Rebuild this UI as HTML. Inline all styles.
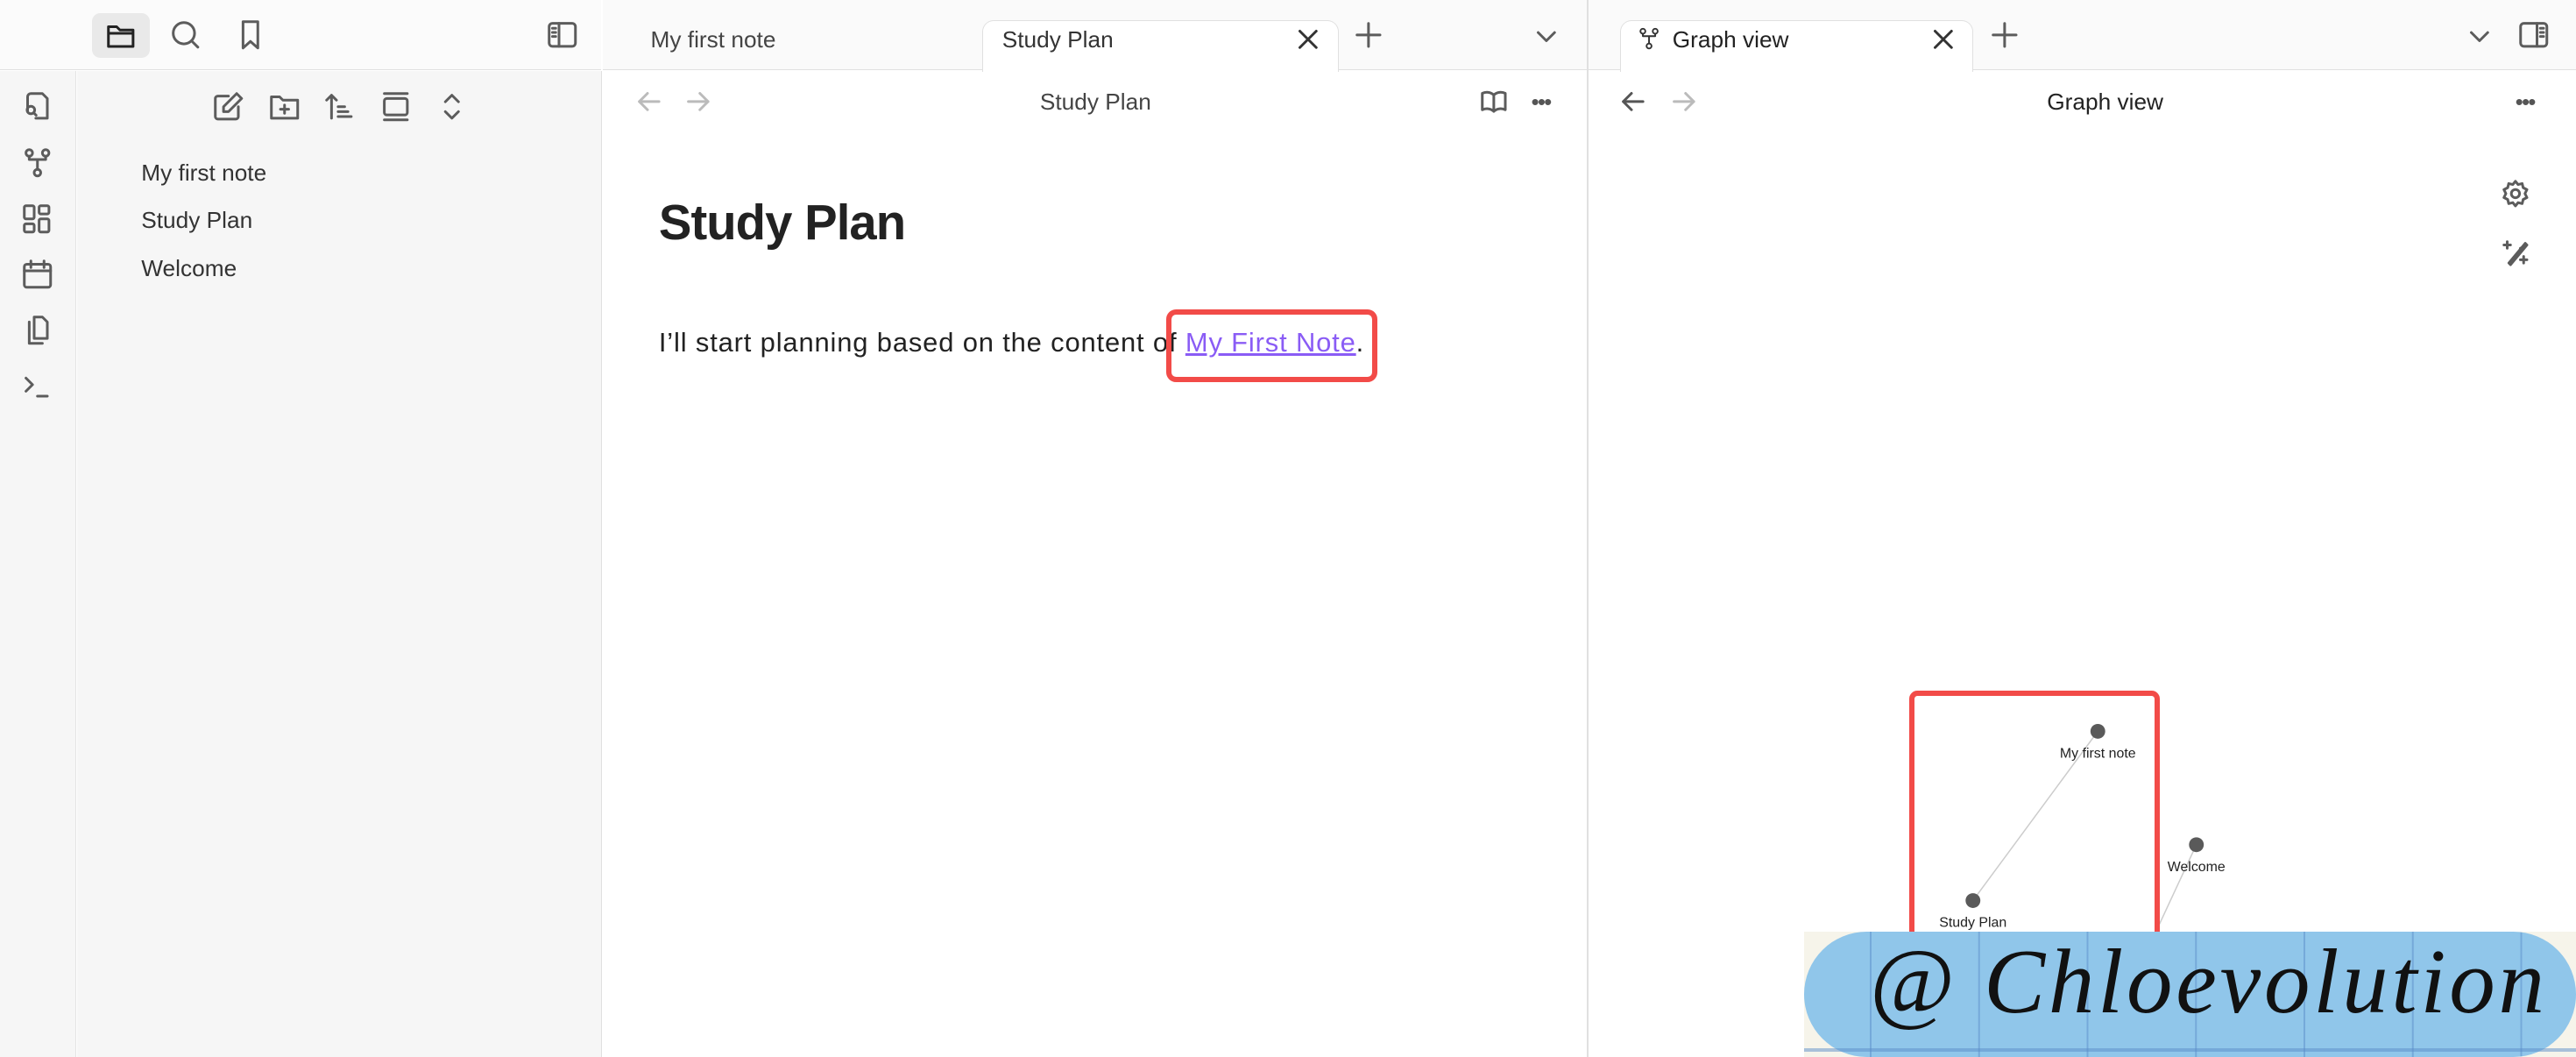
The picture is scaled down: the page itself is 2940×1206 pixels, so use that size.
<!DOCTYPE html>
<html><head><meta charset="utf-8"><style>
html,body{margin:0;padding:0;width:2940px;height:1206px;overflow:hidden;background:#fff}
#z{zoom:1.875;position:relative;width:1568px;height:643px;font-family:"Liberation Sans",sans-serif;overflow:hidden}
.a{position:absolute}
svg.i{position:absolute;fill:none;stroke:#5c5c5c;stroke-width:1.6;stroke-linecap:round;stroke-linejoin:round}
.t{font-size:14px;color:#2e2e2e;position:absolute;white-space:nowrap}
</style></head><body><div id="z">
<div class="a" style="left:0;top:0;width:366px;height:42px;background:#fbfbfb;border-bottom:1px solid #e0e0e0"></div>
<div class="a" style="left:56px;top:8px;width:35px;height:27px;background:#e9e9e9;border-radius:5px"></div>
<svg class="i" style="left:64px;top:12px;stroke:#222" width="20" height="20" viewBox="0 0 20 20"><path d="M2 4h5l2 2h8v10H2z M2 8h15"/></svg>
<svg class="i" style="left:103px;top:11px" width="20" height="20" viewBox="0 0 20 20"><circle cx="9" cy="9" r="6.5"/><path d="M14 14l3.5 3.5"/></svg>
<svg class="i" style="left:143px;top:11px" width="20" height="20" viewBox="0 0 20 20"><path d="M5 2h9v16l-4.5-4-4.5 4z"/></svg>
<svg class="i" style="left:332px;top:11px" width="20" height="20" viewBox="0 0 20 20"><rect x="2" y="3" width="16" height="14" rx="2"/><path d="M8 3v14M4 6h2M4 8.5h2M4 11h2"/></svg>
<div class="a" style="left:0;top:43px;width:46px;height:600px;background:#f6f6f6;border-right:1px solid #e3e3e3"></div>
<svg class="i" style="left:13px;top:55px" width="20" height="20" viewBox="0 0 20 20"><path d="M6 2h7l3 3v12H9M4 13V4a2 2 0 0 1 2-2"/><circle cx="6" cy="12" r="2.3"/><path d="M7.7 13.7l1.5 1.5"/></svg>
<svg class="i" style="left:13px;top:89px" width="20" height="20" viewBox="0 0 20 20"><circle cx="5" cy="4" r="2"/><circle cx="15" cy="4" r="2"/><circle cx="10" cy="16" r="2"/><path d="M5 6v2h10V6M10 8v6"/></svg>
<svg class="i" style="left:13px;top:123px" width="20" height="20" viewBox="0 0 20 20"><rect x="2" y="2" width="6" height="8" rx="1"/><rect x="11" y="2" width="6" height="5" rx="1"/><rect x="2" y="13" width="6" height="5" rx="1"/><rect x="11" y="10" width="6" height="8" rx="1"/></svg>
<svg class="i" style="left:13px;top:157px" width="20" height="20" viewBox="0 0 20 20"><rect x="2" y="4" width="16" height="14" rx="1.5"/><path d="M2 8h16M6 2v4M14 2v4"/></svg>
<svg class="i" style="left:13px;top:191px" width="20" height="20" viewBox="0 0 20 20"><path d="M8 2h5l3 3v10H8z M5 5v13h8"/></svg>
<svg class="i" style="left:13px;top:225px" width="20" height="20" viewBox="0 0 20 20"><path d="M3 5l4 4-4 4M10 16h6"/></svg>
<div class="a" style="left:47px;top:43px;width:319px;height:600px;background:#f6f6f6;border-right:1px solid #e0e0e0"></div>
<svg class="i" style="left:129px;top:55px" width="20" height="20" viewBox="0 0 20 20"><path d="M16 10v6a1.5 1.5 0 0 1-1.5 1.5h-11A1.5 1.5 0 0 1 2 16V5a1.5 1.5 0 0 1 1.5-1.5H10M15 2l3 3-8 8H7v-3z"/></svg>
<svg class="i" style="left:163px;top:55px" width="20" height="20" viewBox="0 0 20 20"><path d="M2 4h5l2 2h9v11H2z M10 9v5M7.5 11.5h5"/></svg>
<svg class="i" style="left:197px;top:55px" width="20" height="20" viewBox="0 0 20 20"><path d="M5 17V3M2 6l3-3 3 3M9 10h4M9 13h6M9 16h8"/></svg>
<svg class="i" style="left:231px;top:55px" width="20" height="20" viewBox="0 0 20 20"><path d="M3 2h14M3 18h14"/><rect x="3" y="5" width="14" height="10" rx="1.5"/></svg>
<svg class="i" style="left:265px;top:55px" width="20" height="20" viewBox="0 0 20 20"><path d="M6 7l4-4 4 4M6 13l4 4 4-4"/></svg>
<div class="t" style="left:86px;top:97px;color:#333">My first note</div>
<div class="t" style="left:86px;top:126px;color:#333">Study Plan</div>
<div class="t" style="left:86px;top:155px;color:#333">Welcome</div>
<div class="a" style="left:367px;top:0;width:600px;height:42px;background:#fafafa;border-bottom:1px solid #e0e0e0"></div>
<div class="t" style="left:396px;top:16px;color:#444">My first note</div>
<div class="a" style="left:598px;top:12px;width:216px;height:31px;background:#fff;border:1px solid #e0e0e0;border-bottom:none;border-radius:7px 7px 0 0"></div>
<div class="t" style="left:610px;top:16px;color:#333">Study Plan</div>
<svg class="i" style="left:787px;top:15px;stroke:#333" width="18" height="18" viewBox="0 0 18 18"><path d="M4 4l10 10M14 4L4 14"/></svg>
<svg class="i" style="left:824px;top:12px" width="18" height="18" viewBox="0 0 18 18"><path d="M9 2v14M2 9h14"/></svg>
<svg class="i" style="left:932px;top:13px" width="18" height="18" viewBox="0 0 18 18"><path d="M4 7l5 5 5-5"/></svg>
<svg class="i" style="left:386px;top:53px;stroke:#bbb" width="18" height="18" viewBox="0 0 18 18"><path d="M15 9H3M8 4L3 9l5 5"/></svg>
<svg class="i" style="left:416px;top:53px;stroke:#bbb" width="18" height="18" viewBox="0 0 18 18"><path d="M3 9h12M10 4l5 5-5 5"/></svg>
<div class="t" style="left:633px;top:54px;color:#444;font-size:14px">Study Plan</div>
<svg class="i" style="left:900px;top:53px" width="18" height="18" viewBox="0 0 18 18"><path d="M9 5C7 3 4 3 2 4v10c2-1 5-1 7 1 2-2 5-2 7-1V4c-2-1-5-1-7 1zM9 5v10"/></svg>
<div class="a" style="left:932px;top:54px;font-size:14px;color:#555;letter-spacing:-1px">•••</div>
<div class="a" style="left:401px;top:118px;font-size:30px;font-weight:bold;color:#222;letter-spacing:-0.5px">Study Plan</div>
<div class="a" style="left:401px;top:199px;font-size:16.5px;color:#222;white-space:nowrap;letter-spacing:0.45px">I’ll start planning based on the content of <span style="color:#8a5cf5;text-decoration:underline">My First Note</span>.</div>
<div class="a" style="left:710px;top:188px;width:122px;height:38px;border:3.5px solid #f24b48;border-radius:6px"></div>
<div class="a" style="left:966px;top:0;width:1px;height:643px;background:#e0e0e0"></div>
<div class="a" style="left:967px;top:0;width:601px;height:42px;background:#fafafa;border-bottom:1px solid #e0e0e0"></div>
<div class="a" style="left:986px;top:12px;width:214px;height:31px;background:#fff;border:1px solid #e0e0e0;border-bottom:none;border-radius:7px 7px 0 0"></div>
<svg class="i" style="left:996px;top:16px;stroke:#333;stroke-width:1.4" width="15" height="15" viewBox="0 0 20 20"><circle cx="5" cy="4" r="2"/><circle cx="15" cy="4" r="2"/><circle cx="10" cy="16" r="2"/><path d="M5 6v2h10V6M10 8v6"/></svg>
<div class="t" style="left:1018px;top:16px;color:#222">Graph view</div>
<svg class="i" style="left:1174px;top:15px;stroke:#333" width="18" height="18" viewBox="0 0 18 18"><path d="M4 4l10 10M14 4L4 14"/></svg>
<svg class="i" style="left:1211px;top:12px" width="18" height="18" viewBox="0 0 18 18"><path d="M9 2v14M2 9h14"/></svg>
<svg class="i" style="left:1500px;top:13px" width="18" height="18" viewBox="0 0 18 18"><path d="M4 7l5 5 5-5"/></svg>
<svg class="i" style="left:1532px;top:11px" width="20" height="20" viewBox="0 0 20 20"><rect x="2" y="3" width="16" height="14" rx="2"/><path d="M12 3v14M14 6h2M14 8.5h2M14 11h2"/></svg>
<svg class="i" style="left:985px;top:53px;stroke:#555" width="18" height="18" viewBox="0 0 18 18"><path d="M15 9H3M8 4L3 9l5 5"/></svg>
<svg class="i" style="left:1016px;top:53px;stroke:#bbb" width="18" height="18" viewBox="0 0 18 18"><path d="M3 9h12M10 4l5 5-5 5"/></svg>
<div class="t" style="left:1246px;top:54px;color:#222">Graph view</div>
<div class="a" style="left:1531px;top:54px;font-size:14px;color:#555;letter-spacing:-1px">•••</div>
<svg class="i" style="left:1522px;top:109px" width="18" height="18" viewBox="0 0 18 18"><circle cx="9" cy="9" r="2.5"/><path d="M9 1.5l1.6 2 2.5-.6.6 2.5 2.3 1.2-1.2 2.4 1.2 2.4-2.3 1.2-.6 2.5-2.5-.6L9 16.5l-1.6-2-2.5.6-.6-2.5L2 11.4l1.2-2.4L2 6.6l2.3-1.2.6-2.5 2.5.6z"/></svg>
<svg class="i" style="left:1522px;top:145px" width="18" height="18" viewBox="0 0 18 18"><path d="M15 3l1 1-10 12-1-1zM12 6l1 1M4 2v4M2 4h4M14 11v4M12 13h4"/></svg>
<svg class="a" style="left:967px;top:400px" width="601" height="243"><path d="M310 45L234 148M370 114L330 200" stroke="#ccc" stroke-width="0.8"/><circle cx="310" cy="45" r="4.5" fill="#5a5a5a"/><circle cx="370" cy="114" r="4.5" fill="#5a5a5a"/><circle cx="234" cy="148" r="4.5" fill="#5a5a5a"/>
<text x="310" y="61" font-size="8.5" text-anchor="middle" font-family="Liberation Sans" fill="#222">My first note</text>
<text x="370" y="130" font-size="8.5" text-anchor="middle" font-family="Liberation Sans" fill="#222">Welcome</text>
<text x="234" y="164" font-size="8.5" text-anchor="middle" font-family="Liberation Sans" fill="#222">Study Plan</text></svg>
<div class="a" style="left:1162px;top:420px;width:146px;height:160px;border:3.5px solid #f24b48;border-radius:5px"></div>
<div class="a" style="left:1098px;top:567px;width:470px;height:76px;background:#f6f4ea"></div>
<div class="a" style="left:1098px;top:567px;width:470px;height:76px;background:#90c6ea;border-radius:40px;overflow:hidden;background-image:linear-gradient(90deg,rgba(90,140,200,.5) 1px,transparent 1px);background-size:66px 100%;background-position:40px 0"></div>
<div class="a" style="left:1098px;top:638px;width:470px;height:2px;background:rgba(90,140,200,.5)"></div>
<div class="a" style="left:1138px;top:565px;font-family:'Liberation Serif',serif;font-style:italic;font-size:56px;color:#111;white-space:nowrap;letter-spacing:2px">@ Chloevolution</div>
</div></body></html>
